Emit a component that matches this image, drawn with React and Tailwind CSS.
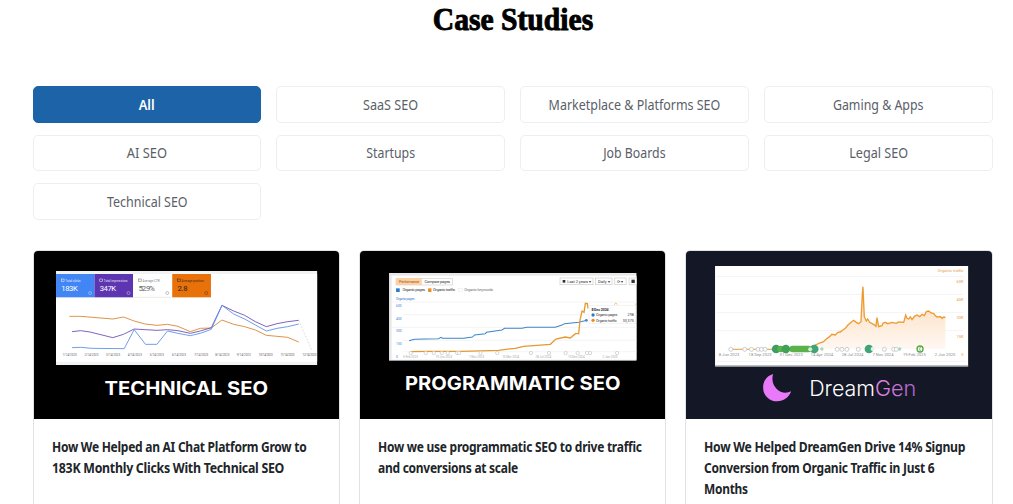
import React, { useState } from 'react';
import clsx from 'clsx';

const filters = [
  { label: 'All', scale: 'scale-x-[0.92]' },
  { label: 'SaaS SEO', scale: 'scale-x-[0.9]' },
  { label: 'Marketplace & Platforms SEO', scale: 'scale-x-[0.89]' },
  { label: 'Gaming & Apps', scale: 'scale-x-[0.885]' },
  { label: 'AI SEO', scale: 'scale-x-[0.92]' },
  { label: 'Startups', scale: 'scale-x-[0.88]' },
  { label: 'Job Boards', scale: 'scale-x-[0.88]' },
  { label: 'Legal SEO', scale: 'scale-x-[0.9]' },
  { label: 'Technical SEO', scale: 'scale-x-[0.89]' },
];

const consoleTiles = [
  { x: 66, w: 115, fill: '#4285f4', color: '#fff', label: 'Total clicks', value: '183K' },
  { x: 181, w: 116, fill: '#5e35b1', color: '#fff', label: 'Total impressions', value: '347K' },
  { x: 297, w: 117, fill: '#fff', color: '#5f6368', label: 'Average CTR', value: '52.9%' },
  { x: 414, w: 116, fill: '#e8710a', color: '#202124', label: 'Average position', value: '2.8' },
];

function TechnicalSeoImage() {
  return (
    <svg viewBox="0 0 915 504" preserveAspectRatio="none" className="block h-[168px] w-full bg-black" fontFamily="Roboto, sans-serif">
      <rect x="66" y="60" width="782" height="282" fill="#f1f3f4" />
      <rect x="66" y="69" width="782" height="263" fill="#fff" />
      {consoleTiles.map((t) => (
        <g key={t.label} fill={t.color}>
          <rect x={t.x} y="69" width={t.w} height="70" fill={t.fill} />
          <rect x={t.x + 16} y="84" width="8" height="7" fill="none" stroke={t.color} strokeWidth="1.5" />
          <text x={t.x + 28} y="92" fontSize="9" opacity="0.85">{t.label}</text>
          <text x={t.x + 16} y="119" fontSize="23" textLength={t.value.length > 3 ? 49 : 30}>{t.value}</text>
          <circle cx={t.x + 102} cy="126" r="4.5" fill="none" stroke={t.color} strokeWidth="1.5" opacity="0.7" />
        </g>
      ))}
      <path d="M297 139H414" stroke="#e0e0e0" strokeWidth="2" />
      <g fill="none" strokeWidth="2.6">
        <polyline stroke="#d9822f" points="106,196 140,196 236,204 268,198 300,210 333,219 368,223 400,220 431,226 468,242 498,232 531,231 563,207 598,220 631,227 663,237 696,253 760,259 793,273" />
        <polyline stroke="#6b4bb5" points="114,242 140,239 168,243 236,260 268,250 300,234 333,236 368,238 400,236 431,239 468,247 498,240 531,230 563,163 598,180 631,193 663,212 696,227 728,218 760,212 793,208" />
        <polyline stroke="#5a8fe8" points="114,290 140,289 173,292 270,293 300,236 334,280 368,280 400,240 431,247 468,254 498,247 531,235 563,163 598,189 631,204 663,222 696,240 728,232 760,227 793,219" />
        <path d="M793 208L810 248L831 295" stroke="#c5c5dd" strokeWidth="2" strokeDasharray="5 5" />
      </g>
      <g fontSize="9" fill="#5f6368" textAnchor="middle">
        {[107, 172, 237, 302, 368, 434, 501, 564, 628, 694, 759, 825].map((x, i) => (
          <text key={x} x={x} y="314" textLength="42">{`${i + 1}/14/2023`}</text>
        ))}
      </g>
      <text x="211" y="432" fontSize="57" fontWeight="700" fill="#fff" fontFamily="Inter, sans-serif" textLength="490" lengthAdjust="spacingAndGlyphs">TECHNICAL SEO</text>
    </svg>
  );
}

function ProgrammaticSeoImage() {
  return (
    <svg viewBox="0 0 915 504" preserveAspectRatio="none" className="block h-[168px] w-full bg-black" fontFamily="Roboto, sans-serif">
      <rect x="87" y="66" width="741" height="263" fill="#e9e9eb" />
      <rect x="95" y="74" width="733" height="252" fill="#fff" />
      <rect x="108" y="82" width="169" height="20" fill="#fff" stroke="#d0d0d0" strokeWidth="2" />
      <rect x="108" y="81" width="77" height="21" fill="#ffd0a3" />
      <g fontSize="12" fill="#333">
        <text x="117" y="96" fill="#95612f" textLength="60">Performance</text>
        <text x="193" y="96" textLength="77">Compare pages</text>
        <text x="127" y="121" textLength="68">Organic pages</text>
        <text x="219" y="121" textLength="66">Organic traffic</text>
        <text x="312" y="121" fill="#777" textLength="87">Organic keywords</text>
        <text x="108" y="146" fontSize="10" fill="#3b83c7" textLength="55">Organic pages</text>
      </g>
      <rect x="108" y="112" width="11" height="11" fill="#2a7cd0" />
      <rect x="204" y="112" width="10" height="11" fill="#f08a1c" />
      <rect x="296" y="112" width="10" height="10" fill="#fff" stroke="#ddd" />
      <g fill="#fff" stroke="#ccc" strokeWidth="2">
        <rect x="599" y="81" width="99" height="20" />
        <rect x="705" y="81" width="50" height="20" />
        <rect x="763" y="81" width="34" height="20" />
        <path d="M828 81H806V101H828" />
      </g>
      <g fontSize="12" fill="#333">
        <rect x="607" y="87" width="8" height="8" />
        <text x="621" y="96" textLength="71">Last 2 years ▾</text>
        <text x="713" y="96">Daily ▾</text>
        <text x="770" y="96">⟳ ▾</text>
        <rect x="813" y="86" width="10" height="10" />
      </g>
      <path d="M95 153H828M130 191H828M95 229H828M130 268H828M130 302H828" stroke="#eeeef0" strokeWidth="2" />
      <g fontSize="10" fill="#3b83c7">
        <text x="108" y="168">600</text>
        <text x="108" y="207">450</text>
        <text x="108" y="244">300</text>
        <text x="108" y="282">150</text>
        <text x="108" y="321">0</text>
      </g>
      <g fill="none" strokeWidth="3">
        <polyline stroke="#3d85c6" points="147,269 163,265 235,263 243,259 247,262 310,262 337,258 343,252 375,248 379,244 425,237 433,232 485,232 500,229 585,229 605,222 613,218 655,214 680,208" />
        <polyline stroke="#e69a2e" strokeWidth="4" points="150,302 200,301 305,301 390,299 415,298 437,295 465,292 490,286 570,280 587,264 615,258 630,261 645,248 655,248 659,207 665,180 671,184 675,157 681,158 683,172" />
        <path d="M761 161L766 156L771 161M824 160L828 158" stroke="#e69a2e" strokeWidth="2" />
      </g>
      <g fill="#fff" stroke="#c4c4c4" strokeWidth="2">
        {[152, 197, 221, 245, 263, 291, 297, 361, 411, 512, 566, 616, 652, 680, 689, 770].map((x) => (
          <circle key={x} cx={x} cy="306" r="5" />
        ))}
      </g>
      <g fontSize="9" fill="#aaa" textAnchor="middle">
        <text x="151" y="321">5 Feb 2023</text>
        <text x="251" y="321">19 Jun 2023</text>
        <text x="349" y="321">1 Nov 2023</text>
        <text x="451" y="321">15 Mar 2024</text>
        <text x="549" y="321">28 Jul 2024</text>
        <text x="648" y="321">10 Dec 2024</text>
        <text x="749" y="321">2 Jan 2025</text>
      </g>
      <rect x="686" y="164" width="140" height="54" fill="#fff" stroke="#eee" strokeWidth="2" />
      <g fontSize="11" fill="#333">
        <text x="693" y="179" fontWeight="700" textLength="52">8 Dec 2024</text>
        <circle cx="698" cy="192" r="5" fill="#2a7cd0" />
        <circle cx="698" cy="208" r="5" fill="#f08a1c" />
        <circle cx="678" cy="208" r="4" fill="#3d85c6" />
        <text x="707" y="196" textLength="64">Organic pages</text>
        <text x="707" y="212" textLength="62">Organic traffic</text>
        <text x="820" y="196" textAnchor="end">298</text>
        <text x="820" y="212" textAnchor="end">33,375</text>
      </g>
      <text x="135" y="417" fontSize="57" fontWeight="700" fill="#fff" fontFamily="Inter, sans-serif" textLength="645" lengthAdjust="spacingAndGlyphs">PROGRAMMATIC SEO</text>
    </svg>
  );
}

const trafficLine =
  '384,284 400,276 412,272 420,264 430,257 437,250 447,252 455,244 462,243 470,237 477,232 485,222 492,216 502,208 510,214 517,218 524,212 528,132 530,107 534,197 540,210 544,204 550,214 562,220 569,226 572,200 577,227 587,224 590,217 597,214 604,218 617,214 630,217 637,213 652,214 658,192 662,202 667,204 672,198 677,206 684,196 692,192 700,197 707,190 714,194 720,182 727,180 734,186 742,188 747,194 752,198 762,197 767,202 772,198 777,199';

function DreamGenImage() {
  return (
    <svg viewBox="0 0 915 504" preserveAspectRatio="none" className="block h-[168px] w-full bg-[#141726]" fontFamily="Roboto, sans-serif">
      <defs>
        <linearGradient id="traffic" x1="0" y1="0" x2="0" y2="1">
          <stop offset="0" stopColor="#fbd9b8" />
          <stop offset="1" stopColor="#fff8f1" />
        </linearGradient>
        <linearGradient id="gen" x1="0" y1="0" x2="1" y2="0">
          <stop offset="0" stopColor="#e487e6" />
          <stop offset="1" stopColor="#ad62c9" />
        </linearGradient>
      </defs>
      <rect x="87" y="45" width="758" height="301" fill="#fff" />
      <rect x="87" y="343" width="758" height="4" fill="#9fa1a8" />
      <path d="M92 76H830M92 130H830M92 185H830M92 239H830M92 331H840" stroke="#f0f0f2" strokeWidth="2.5" />
      <polygon points={`384,294 ${trafficLine} 777,294`} fill="url(#traffic)" />
      <path d="M130 295H270" stroke="#e8983f" strokeWidth="3" />
      <polyline points={trafficLine} fill="none" stroke="#ee9a30" strokeWidth="4" />
      <g fill="#fff" stroke="#b5bab8" strokeWidth="2">
        {[134, 176, 196, 216, 226, 237, 453, 467, 482, 516, 594, 622, 630].map((x) => (
          <circle key={x} cx={x} cy="295" r="6" />
        ))}
      </g>
      <rect x="310" y="284" width="66" height="20" rx="9" fill="#5bb24a" />
      <circle cx="270" cy="294" r="13" fill="#3d9f64" />
      <circle cx="284" cy="294" r="10" fill="#5bb24a" />
      <circle cx="299" cy="294" r="13" fill="#3fa357" />
      <circle cx="384" cy="294" r="13" fill="#41a478" />
      <circle cx="372" cy="295" r="6" fill="#d6eed3" />
      <circle cx="407" cy="294" r="5" fill="#a3d9bc" />
      <circle cx="548" cy="294" r="13" fill="#41a478" />
      <circle cx="559" cy="294" r="6" fill="#e3f2ec" />
      <circle cx="640" cy="294" r="5" fill="#a3d9bc" />
      <circle cx="701" cy="294" r="9" fill="#fff" stroke="#55a945" strokeWidth="4" />
      <path d="M704 290H700V298H704" fill="none" stroke="#55a945" strokeWidth="2" />
      <g fontSize="12.5" fill="#8d8d91" textAnchor="middle">
        <text x="129" y="315">8 Jun 2023</text>
        <text x="222" y="315">18 Sep 2023</text>
        <text x="315" y="315">31 Dec 2023</text>
        <text x="407" y="315">14 Apr 2024</text>
        <text x="499" y="315">28 Jul 2024</text>
        <text x="590" y="315">7 Nov 2024</text>
        <text x="684" y="315">19 Feb 2025</text>
        <text x="776" y="315">2 Jun 2025</text>
      </g>
      <g fontSize="12" fill="#f09a40" textAnchor="end">
        <text x="831" y="63" textLength="77">Organic traffic</text>
        <text x="831" y="96">60K</text>
        <text x="831" y="150">45K</text>
        <text x="831" y="205">30K</text>
        <text x="831" y="260">15K</text>
        <text x="831" y="315">0</text>
      </g>
      <path d="M261 369C241 375 231 391 231 410C231 434 250 451 274 451C292 451 308 440 315 421C300 429 283 426 271 413C260 401 256 385 261 369Z" fill="#e879f9" />
      <g fontFamily="Inter, sans-serif" fontSize="65" fontWeight="300">
        <text x="369" y="436" fill="#fff" textLength="197" lengthAdjust="spacingAndGlyphs">Dream</text>
        <text x="566" y="436" fill="url(#gen)" textLength="124" lengthAdjust="spacingAndGlyphs">Gen</text>
      </g>
    </svg>
  );
}

const studies = [
  {
    Image: TechnicalSeoImage,
    lines: [
      { text: 'How We Helped an AI Chat Platform Grow to', scale: 'scale-x-[0.857]' },
      { text: '183K Monthly Clicks With Technical SEO', scale: 'scale-x-[0.882]' },
    ],
  },
  {
    Image: ProgrammaticSeoImage,
    lines: [
      { text: 'How we use programmatic SEO to drive traffic', scale: 'scale-x-[0.856]' },
      { text: 'and conversions at scale', scale: 'scale-x-[0.856]' },
    ],
  },
  {
    Image: DreamGenImage,
    lines: [
      { text: 'How We Helped DreamGen Drive 14% Signup', scale: 'scale-x-[0.871]' },
      { text: 'Conversion from Organic Traffic in Just 6', scale: 'scale-x-[0.857]' },
      { text: 'Months', scale: 'scale-x-[0.85]' },
    ],
  },
];

function CaseStudyCard({ study }) {
  const { Image, lines } = study;
  return (
    <article className="overflow-hidden rounded-[5px] border border-[#dfe3e6] bg-white">
      <Image />
      <h3 className="flex flex-col items-start px-[18px] pt-[17px] font-['Noto_Sans'] text-[14px] leading-[21px] font-bold tracking-[-0.3px] whitespace-nowrap text-[#212529]">
        {lines.map(({ text, scale }) => (
          <span key={text} className={clsx('origin-left', scale)}>{text}</span>
        ))}
      </h3>
    </article>
  );
}

function App() {
  const [active, setActive] = useState('All');

  return (
    <div className="h-[504px] overflow-hidden bg-white">
      <main className="ml-[32.6px] w-[960px]">
        <h1 className="h-[86px] scale-x-[0.955] pt-[1px] text-center font-['Liberation_Serif'] text-[31px] leading-[38px] font-bold text-black [-webkit-text-stroke:0.9px_black]">
          Case Studies
        </h1>

        {/* Category filters */}
        <div className="grid auto-rows-[36.5px] grid-cols-4 gap-x-[15px] gap-y-3">
          {filters.map(({ label, scale }) => (
            <button
              key={label}
              onClick={() => setActive(label)}
              className={clsx(
                "rounded-[5px] border font-['Noto_Sans'] text-[14px] leading-[21px]",
                active === label
                  ? 'border-[#1d63a7] bg-[#1d63a7] font-semibold text-white'
                  : 'border-[#eceef0] bg-white text-[#5a6068]'
              )}
            >
              <span className={clsx('inline-block', scale)}>{label}</span>
            </button>
          ))}
        </div>

        {/* Case study cards */}
        <div className="mt-[30.5px] grid h-[300px] grid-cols-3 gap-[18.75px]">
          {studies.map((study) => (
            <CaseStudyCard key={study.lines[0].text} study={study} />
          ))}
        </div>
      </main>
    </div>
  );
}

export default App;
